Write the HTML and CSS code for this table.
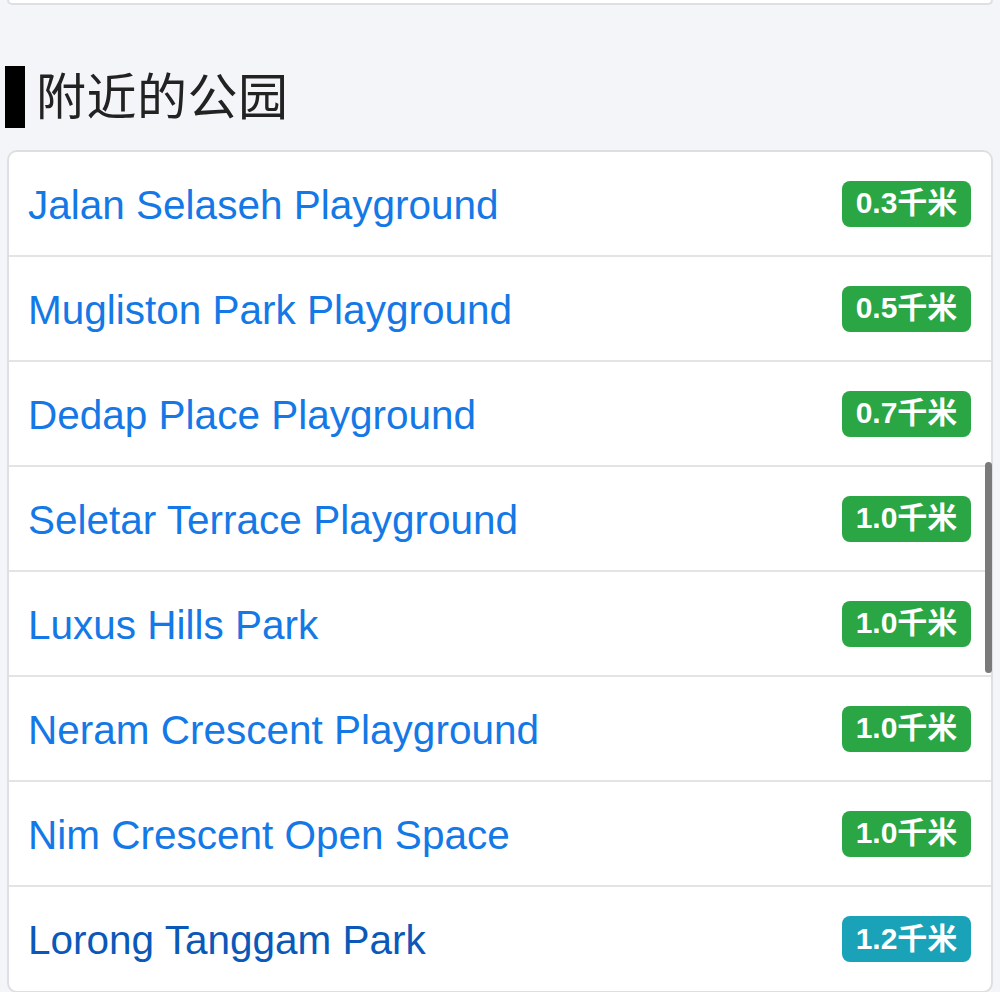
FILE: index.html
```html
<!DOCTYPE html>
<html lang="zh">
<head>
<meta charset="utf-8">
<link rel="stylesheet" href="styles.css">
</head>
<body>
<div class="page">
  <div class="top-card"></div>
  <h2 class="section-title"><span class="bar"></span><span class="title-text">附近的公园</span></h2>
  <ul class="park-list">
    <li class="park"><a class="name">Jalan Selaseh Playground</a><span class="badge green">0.3千米</span></li>
    <li class="park"><a class="name">Mugliston Park Playground</a><span class="badge green">0.5千米</span></li>
    <li class="park"><a class="name">Dedap Place Playground</a><span class="badge green">0.7千米</span></li>
    <li class="park"><a class="name">Seletar Terrace Playground</a><span class="badge green">1.0千米</span></li>
    <li class="park"><a class="name">Luxus Hills Park</a><span class="badge green">1.0千米</span></li>
    <li class="park"><a class="name">Neram Crescent Playground</a><span class="badge green">1.0千米</span></li>
    <li class="park"><a class="name">Nim Crescent Open Space</a><span class="badge green">1.0千米</span></li>
    <li class="park"><a class="name dark">Lorong Tanggam Park</a><span class="badge teal">1.2千米</span></li>
  </ul>
  <div class="scrollbar"></div>
</div>
</body>
</html>
```

FILE: styles.css
```css
* { box-sizing: border-box; }
html, body { margin: 0; padding: 0; }
body {
  background: #f4f5f9;
  font-family: "Liberation Sans", Arial, "Noto Sans CJK SC", sans-serif;
  width: 1000px;
  height: 992px;
  overflow: hidden;
}
.page {
  position: relative;
  padding: 0 7px 0 7px;
}
.top-card {
  height: 5px;
  background: #fff;
  border: 2px solid #dedfe3;
  border-top: none;
  border-radius: 0 0 10px 10px;
}
.section-title {
  display: flex;
  align-items: center;
  margin: 61px 0 0 -2px;
  height: 62px;
  font-weight: normal;
  font-size: 50px;
  line-height: 62px;
  color: #222;
  font-family: "Noto Sans CJK SC", sans-serif;
}
.title-text {
  position: relative;
  top: -4px;
  letter-spacing: 0.5px;
}
.bar {
  width: 20px;
  height: 62px;
  background: #000;
  margin-right: 11px;
}
.park-list {
  list-style: none;
  margin: 22px 0 0 0;
  padding: 0;
  background: #fff;
  border: 2px solid #dedfe3;
  border-radius: 10px;
  width: 986px;
}
.park {
  display: flex;
  align-items: center;
  justify-content: space-between;
  height: 105px;
  padding: 0 20px 0 19px;
  border-bottom: 2px solid #e4e4e6;
}
.park:last-child { border-bottom: none; height: 104px; }
.name {
  color: #1479e6;
  font-size: 40.5px;
  text-decoration: none;
  padding-top: 3px;
}
.name.dark { color: #0b58b8; }
.badge {
  display: inline-flex;
  align-items: center;
  justify-content: center;
  width: 129px;
  height: 46px;
  padding-bottom: 7px;
  border-radius: 8px;
  color: #fff;
  font-weight: bold;
  font-size: 30px;
  font-family: "Liberation Sans", Arial, "Noto Sans CJK SC", sans-serif;
}
.badge.green { background: #2ba644; }
.badge.teal { background: #1aa2b8; }
.scrollbar {
  position: absolute;
  left: 985px;
  top: 462px;
  width: 7px;
  height: 211px;
  border-radius: 4px;
  background: #7a7a7a;
}
```
